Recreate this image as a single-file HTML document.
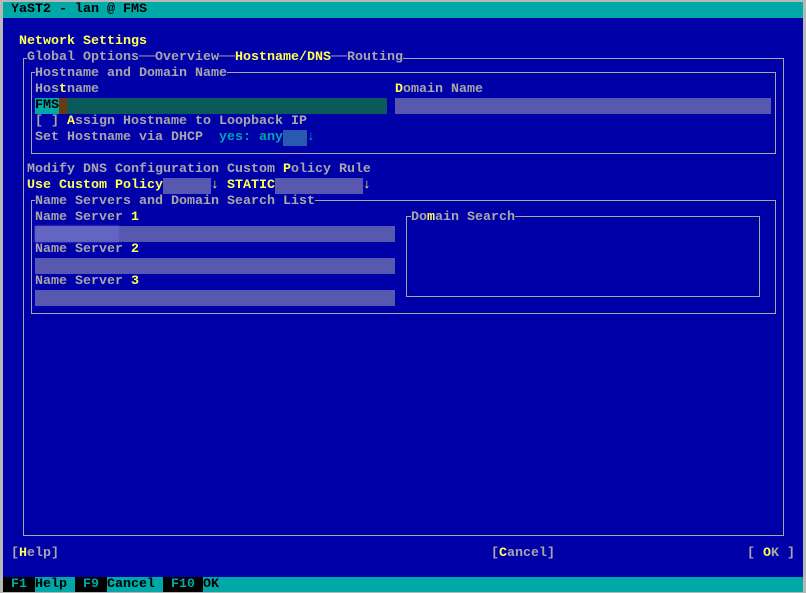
<!DOCTYPE html>
<html><head><meta charset="utf-8"><style>
*{margin:0;padding:0;box-sizing:border-box}
html,body{width:806px;height:593px;overflow:hidden;background:#b8b8b8}
#scr{position:absolute;left:3px;top:2px;width:800px;height:590px;background:#0000a8;overflow:hidden}
.t{position:absolute;font-family:"Liberation Mono",monospace;font-size:13.33px;font-weight:bold;line-height:16px;height:16px;white-space:pre;color:#a8a8a8}
.y{color:#ffff54}
.k{color:#000}
.c{color:#00a8a8}
.b{position:absolute;border:1px solid #a8a8a8}
.f{position:absolute;height:16px;background:#5858b0}
.g{position:absolute;height:16px;background:#0a5a5a}
.bg{background:#0000a8}
</style></head><body><div id="scr">
<div style="position:absolute;left:0;top:0;width:800px;height:16px;background:#00a8a8"></div>
<div class="t k" style="left:8px;top:0">YaST2 - lan @ FMS</div>
<div class="t y" style="left:16px;top:32px">Network Settings</div>

<div class="b" style="left:20px;top:56px;width:761px;height:478px"></div>
<div class="t bg" style="left:24px;top:48px"><span>Global Options</span>──<span>Overview</span>──<span class="y">Hostname/DNS</span>──<span>Routing</span></div>

<div class="b" style="left:28px;top:70px;width:745px;height:82px"></div>
<div class="t bg" style="left:32px;top:64px">Hostname and Domain Name</div>
<div class="t" style="left:32px;top:80px">Hos<span class="y">t</span>name</div>
<div class="t" style="left:392px;top:80px"><span class="y">D</span>omain Name</div>
<div style="position:absolute;left:32px;top:96px;width:24px;height:16px;background:#00a8a8"></div>
<div class="t k" style="left:32px;top:96px">FMS</div>
<div style="position:absolute;left:56px;top:96px;width:8px;height:16px;background:#6a3a10"></div>
<div class="g" style="left:64px;top:96px;width:320px"></div>
<div class="f" style="left:392px;top:96px;width:376px"></div>
<div class="t" style="left:32px;top:112px">[ ] <span class="y">A</span>ssign Hostname to Loopback IP</div>
<div class="t" style="left:32px;top:128px">Set Hostname via DHCP  <span class="c">yes: any</span></div>
<div class="f" style="left:280px;top:128px;width:24px;background:#2a5ab0"></div>
<div class="t c" style="left:304px;top:128px">↓</div>

<div class="t" style="left:24px;top:160px">Modify DNS Configuration Custom <span class="y">P</span>olicy Rule</div>
<div class="t y" style="left:24px;top:176px">Use Custom Policy</div>
<div class="f" style="left:160px;top:176px;width:48px"></div>
<div class="t y" style="left:208px;top:176px">↓ STATIC</div>
<div class="f" style="left:272px;top:176px;width:88px"></div>
<div class="t y" style="left:360px;top:176px">↓</div>

<div class="b" style="left:28px;top:198px;width:745px;height:114px"></div>
<div class="t bg" style="left:32px;top:192px">Name Servers and Domain Search List</div>
<div class="t" style="left:32px;top:208px">Name Server <span class="y">1</span></div>
<div class="f" style="left:32px;top:224px;width:360px"></div>
<div style="position:absolute;left:32px;top:224px;width:84px;height:16px;background:#6464c4;filter:blur(1px)"></div>
<div class="t" style="left:32px;top:240px">Name Server <span class="y">2</span></div>
<div class="f" style="left:32px;top:256px;width:360px"></div>
<div class="t" style="left:32px;top:272px">Name Server <span class="y">3</span></div>
<div class="f" style="left:32px;top:288px;width:360px"></div>

<div class="b" style="left:403px;top:214px;width:354px;height:81px"></div>
<div class="t bg" style="left:408px;top:208px">Do<span class="y">m</span>ain Search</div>

<div class="t" style="left:8px;top:544px">[<span class="y">H</span>elp]</div>
<div class="t" style="left:488px;top:544px">[<span class="y">C</span>ancel]</div>
<div class="t" style="left:744px;top:544px">[ <span class="y">O</span>K ]</div>

<div style="position:absolute;left:0;top:575px;width:800px;height:16px;background:#00a8a8"></div>
<div style="position:absolute;left:0;top:575px;width:32px;height:16px;background:#000"></div>
<div style="position:absolute;left:72px;top:575px;width:32px;height:16px;background:#000"></div>
<div style="position:absolute;left:160px;top:575px;width:40px;height:16px;background:#000"></div>
<div class="t c" style="left:8px;top:575px">F1</div>
<div class="t k" style="left:32px;top:575px">Help</div>
<div class="t c" style="left:80px;top:575px">F9</div>
<div class="t k" style="left:104px;top:575px">Cancel</div>
<div class="t c" style="left:168px;top:575px">F10</div>
<div class="t k" style="left:200px;top:575px">OK</div>
</div></body></html>
